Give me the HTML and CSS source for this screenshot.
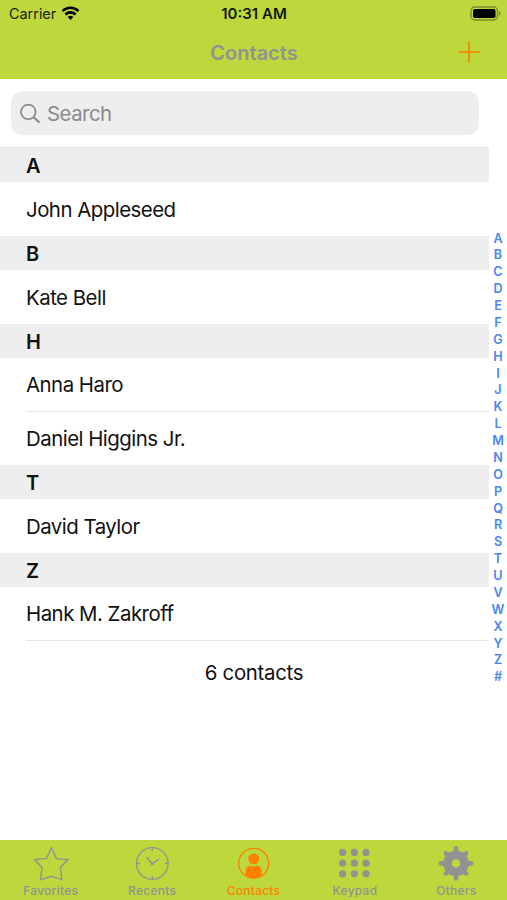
FILE: index.html
```html
<!DOCTYPE html>
<html lang="en">

<head>
    <meta charset="UTF-8">
    <meta name="viewport" content="width=device-width, initial-scale=1.0">
    <title>Contacts</title>
    <link rel="stylesheet" href="styles.css">
</head>

<body>
    <div class="phone">
        <header class="header">
            <div class="status-bar">
                <div class="carrier">
                    <span>Carrier</span>
                    <svg class="wifi" width="19" height="14" viewBox="0 0 18 14" fill="none" stroke="#000" stroke-width="2.6">
                        <path d="M1 5.1a11.4 11.4 0 0 1 16 0" />
                        <path d="M3.9 8.5a7.3 7.3 0 0 1 10.2 0" />
                        <path d="M9 13.9 6.2 11a4 4 0 0 1 5.6 0z" fill="#000" stroke="none" />
                    </svg>
                </div>
                <span class="time">10:31 AM</span>
                <div class="battery">
                    <svg width="31" height="15" viewBox="0 0 31 15">
                        <rect x="1" y="1" width="26.5" height="13" rx="4" fill="none" stroke="#7c8c2e" stroke-width="1.4" />
                        <rect x="3" y="3" width="22.5" height="9" rx="1.8" fill="#000" />
                        <path d="M29 5.2v4.6q1.6-.6 1.6-2.3t-1.6-2.3z" fill="#7c8c2e" />
                    </svg>
                </div>
            </div>
            <div class="nav-bar">
                <h1 class="title">Contacts</h1>
                <svg class="add" width="22" height="22" viewBox="0 0 22 22" stroke="#ff7f00" stroke-width="1.7">
                    <path d="M11 .3v21.4M.3 11h21.4" />
                </svg>
            </div>
        </header>

        <main class="content">
            <div class="list">
                <div class="search">
                    <svg width="20" height="20" viewBox="0 0 20 20" fill="none" stroke="#8a8a8e" stroke-width="1.7">
                        <circle cx="8.3" cy="7.9" r="7.3" />
                        <path d="M13.5 13l5.8 5.6" stroke-width="2.1" />
                    </svg>
                    <span>Search</span>
                </div>

                <h2 class="letter first">A</h2>
                <div class="contact"><span>John Appleseed</span></div>
                <h2 class="letter">B</h2>
                <div class="contact"><span>Kate Bell</span></div>
                <h2 class="letter">H</h2>
                <div class="contact line"><span>Anna Haro</span></div>
                <div class="contact short"><span>Daniel Higgins Jr.</span></div>
                <h2 class="letter">T</h2>
                <div class="contact"><span>David Taylor</span></div>
                <h2 class="letter">Z</h2>
                <div class="contact line"><span>Hank M. Zakroff</span></div>
                <p class="total">6 contacts</p>
            </div>

            <!-- alphabet index on the right -->
            <nav class="index">
                <span>A</span><span>B</span><span>C</span><span>D</span><span>E</span><span>F</span><span>G</span>
                <span>H</span><span>I</span><span>J</span><span>K</span><span>L</span><span>M</span><span>N</span>
                <span>O</span><span>P</span><span>Q</span><span>R</span><span>S</span><span>T</span><span>U</span>
                <span>V</span><span>W</span><span>X</span><span>Y</span><span>Z</span><span>#</span>
            </nav>
        </main>

        <nav class="tab-bar">
            <div class="tab">
                <svg width="36" height="36" viewBox="0 0 36 36" fill="none" stroke="currentColor" stroke-width="1.4">
                    <path d="M18.5 2.5 23.4 13.6 34.9 14.6 27.4 22.6 28.9 34.8 18.5 31.3 7.6 34.8 9 22.6 1.6 14.6 13.6 13.4z" />
                </svg>
                <span>Favorites</span>
            </div>
            <div class="tab">
                <svg width="36" height="36" viewBox="0 0 36 36" fill="none" stroke="currentColor" stroke-width="1.3">
                    <circle cx="18.3" cy="18.5" r="15.8" />
                    <path d="M18.3 2.7v3.5M18.3 30.8v3.5M2.5 18.5H6M30.6 18.5h3.5" />
                    <path d="M12.6 12 18.1 18.9 25 14" stroke-width="1.5" />
                    <circle cx="18.2" cy="18.9" r="1.4" fill="currentColor" stroke="none" />
                </svg>
                <span>Recents</span>
            </div>
            <div class="tab active">
                <svg width="36" height="36" viewBox="0 0 36 36" fill="currentColor">
                    <circle cx="17.7" cy="18.3" r="15" fill="none" stroke="currentColor" stroke-width="1.3" />
                    <circle cx="17.7" cy="13.9" r="5.4" />
                    <path d="M9.5 30.6C9.5 24.5 10.5 20.8 14 20.8c1.3 0 2 .8 3.7.8s2.4-.8 3.7-.8c3.5 0 4.5 3.7 4.5 9.8A15 15 0 0 1 9.5 30.6z" />
                </svg>
                <span>Contacts</span>
            </div>
            <div class="tab">
                <svg width="36" height="36" viewBox="0 0 36 36" fill="currentColor">
                    <circle cx="5.6" cy="7.4" r="3.6" /><circle cx="17.4" cy="7.4" r="3.6" /><circle cx="29" cy="7.4" r="3.6" />
                    <circle cx="5.6" cy="18.2" r="3.6" /><circle cx="17.4" cy="18.2" r="3.6" /><circle cx="29" cy="18.2" r="3.6" />
                    <circle cx="5.6" cy="28.8" r="3.6" /><circle cx="17.4" cy="28.8" r="3.6" /><circle cx="29" cy="28.8" r="3.6" />
                </svg>
                <span>Keypad</span>
            </div>
            <div class="tab">
                <svg width="36" height="36" viewBox="0 0 36 36">
                    <circle cx="18" cy="18.4" r="8.5" fill="none" stroke="currentColor" stroke-width="8.6" />
                    <!-- eight teeth -->
                    <g stroke="currentColor" stroke-width="4.6" stroke-linecap="round">
                        <path d="M18 7V3.4M18 29.6v3.8M7 18.4H3M29 18.4h4" />
                        <path d="M10 10.4 7.8 8.2M26 10.4l2.2-2.2M10 26.4l-2.2 2.2M26 26.4l2.2 2.2" />
                    </g>
                </svg>
                <span>Others</span>
            </div>
        </nav>
    </div>
</body>

</html>
```
FILE: styles.css
```css
* {
    margin: 0;
    padding: 0;
    box-sizing: border-box;
}

body {
    font-family: Inter, "Liberation Sans", sans-serif;
    background-color: #fff;
    color: #111;
}

.phone {
    display: flex;
    flex-direction: column;
    width: 507px;
    height: 900px;
    overflow: hidden;
}

/* top bar */
.header {
    height: 79px;
    background-color: #bcd83c;
}

.status-bar {
    display: grid;
    grid-template-columns: 1fr auto 1fr;
    align-items: center;
    height: 27px;
    padding: 0 6px 0 9px;
}

.carrier {
    display: flex;
    align-items: center;
    gap: 5px;
    font-size: 14.4px;
    color: #1c2008;
}

.wifi {
    margin-bottom: 2px;
}

.time {
    margin-right: 2px;
    font-size: 15px;
    font-weight: 600;
    color: #14180a;
}

.battery {
    display: flex;
    justify-content: flex-end;
}

.nav-bar {
    display: grid;
    grid-template-columns: 1fr auto 1fr;
    align-items: center;
    height: 50px;
    padding: 0 27px 0 28px;
}

.title {
    grid-column: 2;
    padding-top: 1px;
    font-size: 20px;
    font-weight: 600;
    color: #929292;
}

.add {
    justify-self: end;
}

/* contact list */
.content {
    display: flex;
    flex: 1;
}

.list {
    width: 489px;
    padding-top: 12px;
}

.search {
    display: flex;
    align-items: center;
    gap: 7px;
    width: 468px;
    height: 44px;
    margin: 0 0 12px 11px;
    padding: 1px 0 0 9px;
    border-radius: 12px;
    background-color: #eeeeee;
    color: #8a8a8e;
    font-size: 20.4px;
    letter-spacing: -0.5px;
}

.letter {
    height: 34px;
    padding-left: 26px;
    background-color: #eeeeee;
    font-size: 20px;
    font-weight: 600;
    line-height: 36px;
}

.first {
    height: 35px;
    border-top: 1px solid #e2e2e2;
}

.contact {
    display: flex;
    align-items: center;
    height: 54px;
    margin-left: 26px;
    font-size: 20.4px;
    letter-spacing: -0.5px;
}

.line {
    border-bottom: 1px solid #e6e6e6;
}

.short {
    height: 53px;
}

.total {
    padding-left: 19px;
    font-size: 20.4px;
    letter-spacing: -0.3px;
    line-height: 63px;
    text-align: center;
}

.index {
    display: flex;
    flex-direction: column;
    width: 18px;
    padding-top: 151.5px;
    color: #4a86f0;
    font-size: 12.6px;
    font-weight: 600;
    line-height: 16.88px;
    text-align: center;
}

/* bottom tabs */
.tab-bar {
    display: flex;
    height: 60px;
    background-color: #bcd83c;
}

.tab {
    display: flex;
    flex: 1;
    flex-direction: column;
    align-items: center;
    padding-top: 5px;
    color: #929292;
    font-size: 12px;
    font-weight: 500;
    letter-spacing: 0.25px;
    line-height: 20px;
}

.tab svg {
    flex-shrink: 0;
}

.active {
    color: #ff7f00;
}
```
